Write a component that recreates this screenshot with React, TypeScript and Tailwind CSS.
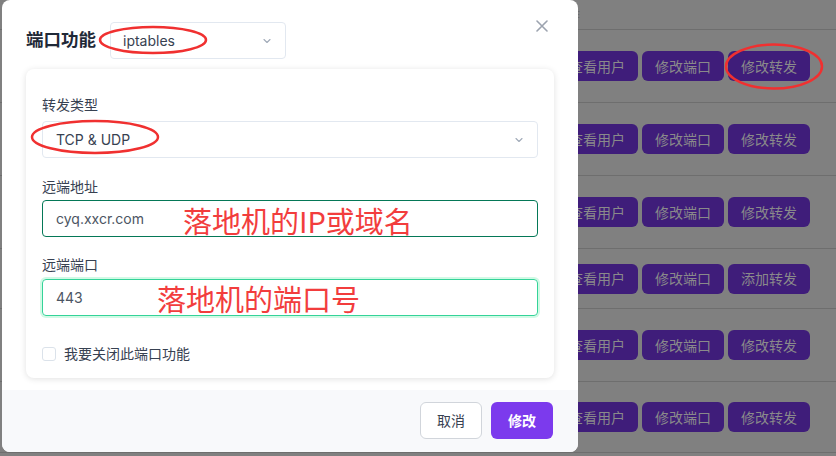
import React from "react";

const rows = [
  { h: "h-[73px]", last: "修改转发" },
  { h: "h-[73px]", last: "修改转发" },
  { h: "h-[73px]", last: "修改转发" },
  { h: "h-[60px]", last: "添加转发" },
  { h: "h-[73px]", last: "修改转发" },
  { h: "h-[71px]", last: "修改转发" },
];

function BgButton({ children }: { children: React.ReactNode }) {
  return (
    <div className="flex h-[30px] w-[82px] items-center justify-center rounded-[6px] bg-[#3f1d7a] text-[14px] text-[#8a8a8a]">
      {children}
    </div>
  );
}

function Chevron() {
  return (
    <svg width="12" height="12" viewBox="0 0 24 24" fill="none" stroke="#a0aab8" strokeWidth="2.2" strokeLinecap="round" strokeLinejoin="round">
      <path d="M6 9l6 6 6-6" />
    </svg>
  );
}

function Label({ children }: { children: React.ReactNode }) {
  return <div className="h-5 text-[14px] leading-5 text-[#374151]">{children}</div>;
}

export default function App() {
  return (
    <div
      className="relative h-[456px] w-[836px] overflow-hidden bg-[#808080]"
      style={{ fontFamily: 'Inter, "Noto Sans CJK SC", sans-serif' }}
    >
      {/* page behind the overlay */}
      <div className="flex flex-col">
        <div className="flex h-[30px] items-center border-b border-[#6e6e6e] pl-[552px] text-[14px] text-[#6a6a6a]">
          操作
        </div>
        {rows.map((r, i) => (
          <div key={i} className={`${r.h} flex items-center justify-end border-b border-[#6e6e6e] pr-[26px]`}>
            <div className="flex gap-1">
              <BgButton>查看用户</BgButton>
              <BgButton>修改端口</BgButton>
              <BgButton>{r.last}</BgButton>
            </div>
          </div>
        ))}
      </div>

      {/* modal */}
      <div className="absolute left-[2px] top-0 flex h-[452px] w-[576px] flex-col overflow-hidden rounded-lg bg-white">
        <div className="flex items-center gap-[14px] pl-6 pt-[22px]">
          <div className="w-[70px] text-[17.5px] font-bold text-[#1f2937]">端口功能</div>
          <div className="flex h-[37px] w-[176px] items-center justify-between rounded border border-[#e2e8f0] pl-3 pr-3 text-[14px] text-[#374151]">
            <span>iptables</span>
            <Chevron />
          </div>
        </div>
        <svg className="absolute right-[30px] top-[20px]" width="12" height="12" viewBox="0 0 12 12" stroke="#9ca3af" strokeWidth="1.6" strokeLinecap="round">
          <path d="M1 1l10 10M11 1L1 11" />
        </svg>

        <div className="mx-6 mt-[10px] flex flex-col rounded-lg bg-white px-4 pb-[14px] pt-[26px] shadow-[0_1px_6px_rgba(0,0,0,0.12)]">
          <Label>转发类型</Label>
          <div className="mt-[6px] flex h-[37px] items-center justify-between rounded border border-[#e2e8f0] pl-[13px] pr-3 text-[14px] text-[#374151]">
            <span>TCP &amp; UDP</span>
            <Chevron />
          </div>
          <div className="mt-[19px]">
            <Label>远端地址</Label>
          </div>
          <div className="mt-[3px] flex h-[37px] items-center rounded border border-[#047857] pl-[13px] text-[14px] text-[#4b5563]">
            cyq.xxcr.com
          </div>
          <div className="mt-[18px]">
            <Label>远端端口</Label>
          </div>
          <div className="mt-[4px] flex h-[37px] items-center rounded border border-[#34d399] pl-[13px] text-[14px] text-[#4b5563] ring-2 ring-[#d1fae5]">
            443
          </div>
          <div className="mt-[27px] flex items-center gap-[8px]">
            <div className="h-[14px] w-[14px] rounded-[3px] border border-[#dbe2ea] bg-white" />
            <span className="text-[14px] text-[#374151]">我要关闭此端口功能</span>
          </div>
        </div>

        <div className="mt-auto flex h-[62px] items-start justify-end gap-[9px] bg-[#f8f9fb] pr-[25px] pt-[12px]">
          <div className="flex h-[37px] w-[62px] items-center justify-center rounded-md border border-[#d1d5db] bg-white text-[14px] text-[#374151]">
            取消
          </div>
          <div className="flex h-[37px] w-[62px] items-center justify-center rounded-md bg-[#7c3aed] text-[14px] font-semibold text-white">
            修改
          </div>
        </div>
      </div>

      {/* annotations */}
      <div
        className="absolute left-[183px] top-[203px] text-[29px] leading-[34px] text-[#f23d3d]"
        style={{ fontFamily: '"Noto Sans CJK SC", sans-serif' }}
      >
        落地机的IP或域名
      </div>
      <div
        className="absolute left-[157px] top-[281px] text-[29px] leading-[34px] text-[#f23d3d]"
        style={{ fontFamily: '"Noto Sans CJK SC", sans-serif' }}
      >
        落地机的端口号
      </div>
      <svg className="absolute left-0 top-0" width="836" height="456" fill="none" stroke="#f03030" strokeWidth="2.5">
        <ellipse cx="153" cy="40" rx="53" ry="13" />
        <ellipse cx="95" cy="137" rx="63" ry="16" />
        <ellipse cx="774" cy="66.5" rx="48" ry="22" />
      </svg>
    </div>
  );
}
